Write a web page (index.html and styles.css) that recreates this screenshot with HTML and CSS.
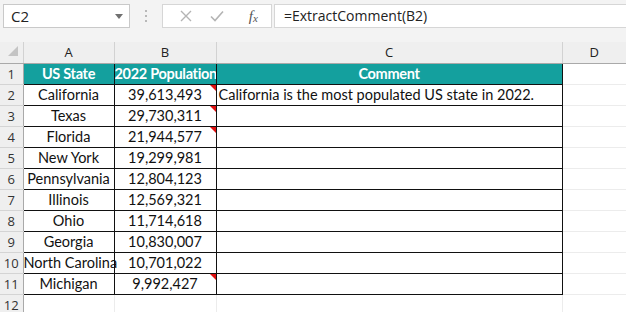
FILE: index.html
```html
<!DOCTYPE html>
<html lang="en">
<head>
<meta charset="UTF-8">
<title>ExtractComment</title>
<link rel="stylesheet" href="styles.css">
</head>
<body>
  <!-- Name box and formula bar -->
  <div class="toolbar">
    <div class="name-box">
      <span>C2</span>
      <svg class="drop" width="8" height="5" viewBox="0 0 8 5"><path d="M0 0H8L4 5Z" fill="#707070"/></svg>
    </div>
    <div class="grip"><i></i><i></i><i></i></div>
    <div class="fx-buttons">
      <svg width="12" height="12" viewBox="0 0 12 12"><path d="M1 1L11 11M11 1L1 11" stroke="#b4b4b4" stroke-width="1.4"/></svg>
      <svg width="14" height="12" viewBox="0 0 14 12"><path d="M1 6.5L5 10.5L13 1.5" stroke="#b4b4b4" stroke-width="1.6" fill="none"/></svg>
      <span class="fx">f<sub>x</sub></span>
    </div>
    <div class="formula">=ExtractComment(B2)</div>
  </div>

  <!-- Sheet grid -->
  <table class="sheet">
    <colgroup>
      <col class="c-rh"><col class="c-a"><col class="c-b"><col class="c-c"><col class="c-d">
    </colgroup>
    <tr class="col-head">
      <th class="corner"><span class="select-all"></span></th>
      <th>A</th><th>B</th><th>C</th><th>D</th>
    </tr>
    <tr>
      <th class="rh">1</th>
      <td class="hd">US State</td><td class="hd">2022 Population</td><td class="hd">Comment</td><td class="free"></td>
    </tr>
    <tr>
      <th class="rh">2</th>
      <td class="bx ctr">California</td><td class="bx ctr note">39,613,493</td><td class="bx">California is the most populated US state in 2022.</td><td class="free"></td>
    </tr>
    <tr>
      <th class="rh">3</th>
      <td class="bx ctr">Texas</td><td class="bx ctr note">29,730,311</td><td class="bx"></td><td class="free"></td>
    </tr>
    <tr>
      <th class="rh">4</th>
      <td class="bx ctr">Florida</td><td class="bx ctr note">21,944,577</td><td class="bx"></td><td class="free"></td>
    </tr>
    <tr>
      <th class="rh">5</th>
      <td class="bx ctr">New York</td><td class="bx ctr">19,299,981</td><td class="bx"></td><td class="free"></td>
    </tr>
    <tr>
      <th class="rh">6</th>
      <td class="bx ctr">Pennsylvania</td><td class="bx ctr">12,804,123</td><td class="bx"></td><td class="free"></td>
    </tr>
    <tr>
      <th class="rh">7</th>
      <td class="bx ctr">Illinois</td><td class="bx ctr">12,569,321</td><td class="bx"></td><td class="free"></td>
    </tr>
    <tr>
      <th class="rh">8</th>
      <td class="bx ctr">Ohio</td><td class="bx ctr">11,714,618</td><td class="bx"></td><td class="free"></td>
    </tr>
    <tr>
      <th class="rh">9</th>
      <td class="bx ctr">Georgia</td><td class="bx ctr">10,830,007</td><td class="bx"></td><td class="free"></td>
    </tr>
    <tr>
      <th class="rh">10</th>
      <td class="bx ctr">North Carolina</td><td class="bx ctr">10,701,022</td><td class="bx"></td><td class="free"></td>
    </tr>
    <tr>
      <th class="rh">11</th>
      <td class="bx ctr">Michigan</td><td class="bx ctr note">9,992,427</td><td class="bx"></td><td class="free"></td>
    </tr>
    <tr>
      <th class="rh">12</th>
      <td class="free"></td><td class="free"></td><td class="free"></td><td class="free"></td>
    </tr>
  </table>
</body>
</html>
```

FILE: styles.css
```css
/* Excel-like sheet */
body {
  margin: 0;
  padding: 0;
  background: #ffffff;
  font-family: Lato, "Open Sans", sans-serif;
  overflow: hidden;
}
.toolbar {
  display: flex;
  align-items: center;
  height: 42px;
  background: #f3f3f3;
  padding: 0 0 0 3px;
  box-sizing: border-box;
}
.name-box {
  display: flex;
  align-items: center;
  justify-content: space-between;
  width: 127px;
  height: 24px;
  margin-top: -10px;
  background: #fff;
  border: 1px solid #c9c9c9;
  box-sizing: border-box;
  padding: 0 6px 0 7px;
  font-family: "Open Sans", sans-serif;
  font-size: 15px;
  color: #222;
}
.grip {
  display: flex;
  flex-direction: column;
  gap: 3px;
  width: 32px;
  align-items: center;
  margin-top: -10px;
}
.grip i {
  display: block;
  width: 2px;
  height: 2px;
  background: #b8b8b8;
}
.fx-buttons {
  display: flex;
  align-items: center;
  justify-content: space-around;
  width: 110px;
  height: 24px;
  margin-top: -10px;
  padding: 0 4px 0 8px;
  background: #fff;
  border: 1px solid #d6d6d6;
  box-sizing: border-box;
}
.fx {
  font-family: "Liberation Serif", serif;
  font-style: italic;
  font-size: 15px;
  color: #555;
  margin-left: 6px;
}
.fx sub {
  font-size: 11px;
  vertical-align: -1px;
}
.formula {
  flex: 1;
  height: 24px;
  line-height: 22px;
  margin: -10px 0 0 2px;
  background: #fff;
  border: 1px solid #d6d6d6;
  border-right: none;
  box-sizing: border-box;
  padding-left: 9px;
  font-family: "Open Sans", sans-serif;
  font-size: 14px;
  color: #222;
}
.sheet {
  table-layout: fixed;
  border-collapse: collapse;
  width: 626px;
  font-size: 14.5px;
  color: #111;
}
.c-rh { width: 23px; }
.c-a { width: 91px; }
.c-b { width: 102px; }
.c-c { width: 346px; }
.c-d { width: 64px; }
.sheet tr { height: 21px; }
.sheet td, .sheet th {
  padding: 0 2px;
  white-space: nowrap;
  overflow: visible;
  font-weight: normal;
}
.col-head { height: 20px; }
.col-head th {
  background: #efefef;
  border-right: 1px solid #d2d2d2;
  border-bottom: 1px solid #a9a9a9;
  font-family: "Open Sans", sans-serif;
  font-size: 13px;
  color: #222;
  text-align: center;
}
.col-head th:last-child { border-right: none; }
.corner {
  position: relative;
}
.select-all {
  position: absolute;
  left: 8px;
  top: 4px;
  width: 0;
  height: 0;
  border-left: 10px solid transparent;
  border-bottom: 10px solid #c4c4c4;
}
.sheet .rh {
  background: #efefef;
  border-right: 1px solid #a9a9a9;
  border-bottom: 1px solid #d4d4d4;
  font-family: "Open Sans", sans-serif;
  font-size: 13px;
  color: #333;
  text-align: center;
  padding: 0;
}
.sheet .hd {
  background: #14a09e;
  color: #fff;
  font-weight: bold;
  text-align: center;
  letter-spacing: -0.3px;
  padding: 0;
  overflow: hidden;
  border: 1px solid #111;
}
.bx {
  border: 1px solid #111;
}
.sheet .ctr {
  text-align: center;
  padding: 0;
}
.note { position: relative; }
.note::after {
  content: "";
  position: absolute;
  right: 0;
  top: 0;
  border-left: 6px solid transparent;
  border-top: 6px solid #e01010;
}
.free {
  border-right: 1px solid #ececec;
  border-bottom: 1px solid #ececec;
}
```
